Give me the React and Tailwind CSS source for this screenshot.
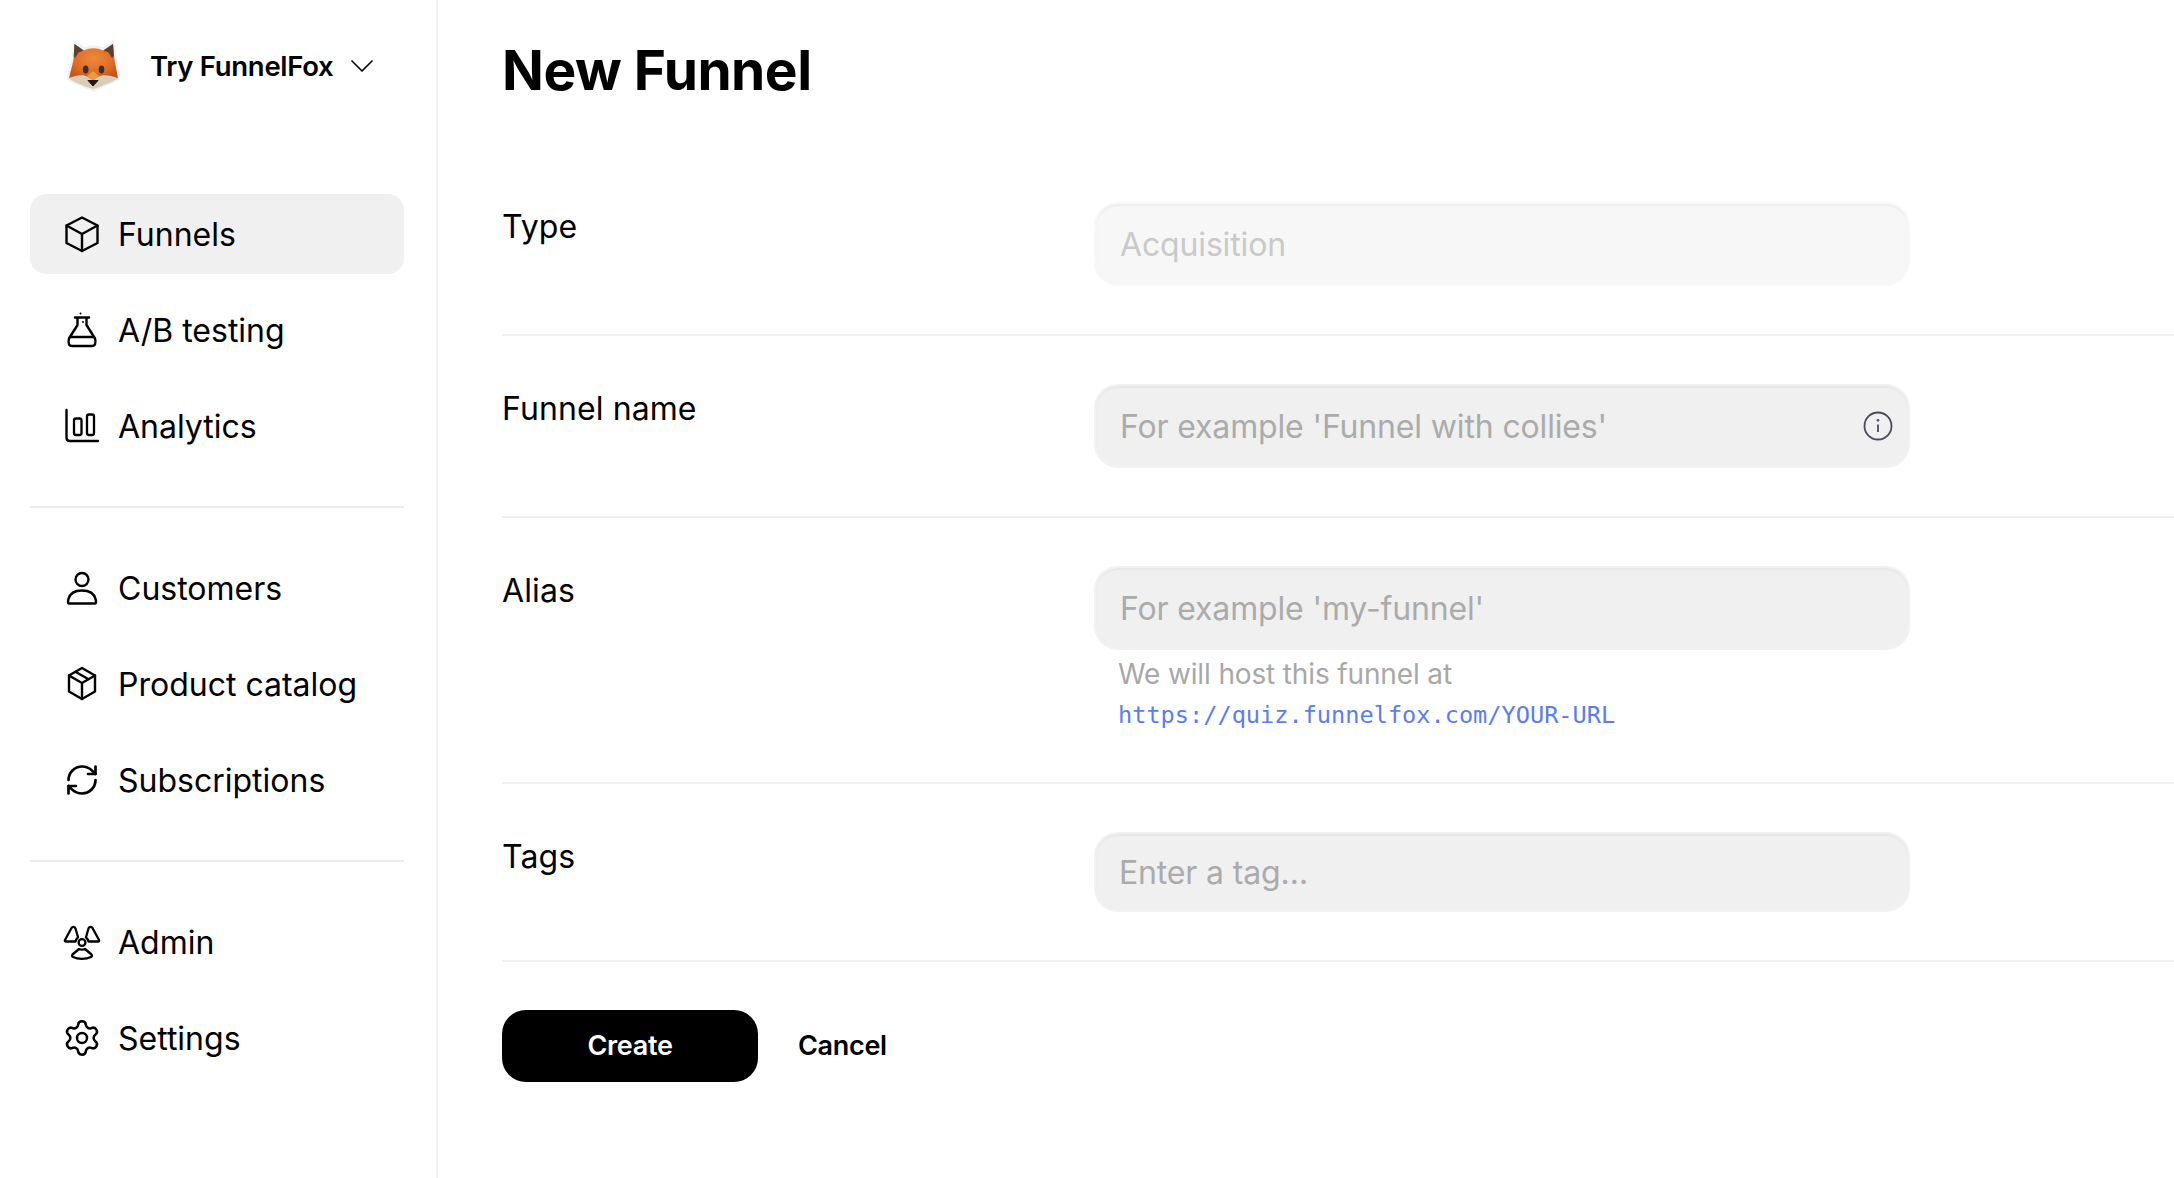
import React from "react";
import { RefreshCw, Settings, ChevronDown } from "lucide-react";

const Ic = ({ children }) => (
  <svg width="40" height="40" viewBox="0 0 40 40" fill="none" stroke="currentColor" strokeWidth="2.400" strokeLinejoin="round" strokeLinecap="round" className="shrink-0">
    {children}
  </svg>
);

const Cube = () => (
  <Ic>
    <path d="M20 3.500 35.500 11.500V29L20 37 4.500 29V11.500Z" />
    <path d="M4.500 11.500 20 20 35.500 11.500M20 20V37" />
  </Ic>
);
const Flask = () => (
  <Ic>
    <path d="M13 7.500H27M15.500 7.500V15L7 28.500C6 32 6.500 36 10 36H30C33.500 36 34 32 33 28.500L24.500 15V7.500" />
    <path d="M8 27H32" />
    <circle cx="18.500" cy="3.500" r="1" fill="currentColor" stroke="none" />
    <circle cx="21" cy="12" r="1" fill="currentColor" stroke="none" />
  </Ic>
);
const Chart = () => (
  <Ic>
    <path d="M4.500 4V31.500C4.500 33.500 5.500 35 8 35H36" />
    <rect x="12" y="12.500" width="7.500" height="16.500" rx="2" strokeWidth="2.300" />
    <rect x="25" y="8.500" width="7" height="20.500" rx="2" strokeWidth="2.300" />
  </Ic>
);
const Person = () => (
  <Ic>
    <circle cx="20" cy="11.500" r="6.500" />
    <path d="M7 35.500C5.500 35.500 6 32.500 6.500 31 8 25 13 22.500 20 22.500S32 25 33.500 31C34 32.500 34.500 35.500 33 35.500Z" />
  </Ic>
);
const Pack = () => (
  <Ic>
    <path d="M20 4 33 11.500V27.500L20 35 7 27.500V11.500Z" />
    <path d="M7 11.500 20 19 33 11.500M20 19V35M13.500 7.800 26.500 15.200" />
  </Ic>
);
const Radiation = () => (
  <Ic>
    <circle cx="20" cy="20.500" r="3.400" strokeWidth="2.300" />
    <path d="M9.500 6 3 18C2.500 19 3 19.500 4 19.500H13.500C14 17.500 14.800 16.300 16 15.300L13.500 6.500C12.800 4.500 10.500 4.300 9.500 6Z" strokeWidth="2.300" />
    <path d="M30.500 6 37 18C37.500 19 37 19.500 36 19.500H26.500C26 17.500 25.200 16.300 24 15.300L26.500 6.500C27.200 4.500 29.500 4.300 30.500 6Z" strokeWidth="2.300" />
    <path d="M17 27C19 27.800 21 27.800 23 27L29.500 32.500C30.500 33.500 30 34.500 29 35 24 37.500 16 37.500 11 35 10 34.500 9.500 33.500 10.500 32.500Z" strokeWidth="2.300" />
  </Ic>
);

const Fox = () => (
  <svg width="66" height="60" viewBox="60 35 66 60" className="shrink-0">
    <defs>
      <radialGradient id="fx" cx="50%" cy="40%" r="60%">
        <stop offset="0%" stopColor="#ee8a3c" />
        <stop offset="70%" stopColor="#dd6a22" />
        <stop offset="100%" stopColor="#c4541a" />
      </radialGradient>
    </defs>
    <path d="M75 42 84 49C90 46.500 97 46.500 103 49L113 42 115 58 119 78C112 83 105 84 100 87L93 90 86 87C81 84 74 83 68 78L73 58Z" fill="#fff" stroke="#f1f1f1" strokeWidth="3" strokeLinejoin="round" />
    <path d="M74.500 44 84 50.500C90 47.500 97 47.500 103 50.500L113 44 114.500 60 118 78C111 81 104 80 93 80S75 81 69 78L73.500 60Z" fill="url(#fx)" />
    <path d="M74.500 44 83.500 50.500 78.500 52.500 75 58 73.800 56Z" fill="#544235" />
    <path d="M113 44 103.500 50.500 108.500 52.500 112 58 113.800 56Z" fill="#544235" />
    <path d="M69 78C76 75 84 74 88 77L93 80 98 77C102 74 110 75 118 78 112 83 105 84 100 87L93 89 86 87C81 84 74 83 69 78Z" fill="#dccdb8" />
    <path d="M87 76 93 71 99 76 93 81Z" fill="#eb9a3e" />
    <ellipse cx="85.700" cy="69.500" rx="2.800" ry="4" fill="#3a3230" />
    <ellipse cx="101.500" cy="69.500" rx="2.800" ry="4" fill="#3a3230" />
    <path d="M88 80.500H98L93 86Z" fill="#1f1a1a" strokeLinejoin="round" stroke="#1f1a1a" />
  </svg>
);

const NavItem = ({ icon, label, active }) => (
  <div className={`flex h-20 items-center gap-4 rounded-2xl pl-8 text-[32px] leading-none text-black ${active ? "bg-[#f0f0f0]" : ""}`}>
    {icon}
    <span className="pt-[2px]">{label}</span>
  </div>
);

const Field = ({ placeholder, disabled, height = "h-[84px]", inset = "pl-[24px]", icon }) => (
  <div className={`relative ${height} w-full rounded-3xl border-2 shadow-[inset_0_2px_2px_rgba(0,0,0,0.04)] ${disabled ? "border-[#f8f8f8] bg-[#f7f7f7]" : "border-[#f2f2f2] bg-[#f0f0f0]"}`}>
    <input
      readOnly
      placeholder={placeholder}
      className={`h-full w-full bg-transparent ${inset} pr-16 text-[32px] tracking-[-0.15px] outline-none ${disabled ? "placeholder:text-[#c9c9c9]" : "placeholder:text-[#ababab]"}`}
    />
    {icon}
  </div>
);

const Row = ({ label, children }) => (
  <div className="grid grid-cols-[592px_816px] border-b-2 border-[#f0f0f0] py-12">
    <div className="pt-[1px] text-[32px] leading-[48px] tracking-[0.1px] text-black">{label}</div>
    <div>{children}</div>
  </div>
);

const Info = (
  <svg width="30" height="30" viewBox="0 0 30 30" fill="none" stroke="#4a4a5c" strokeWidth="1.800" className="absolute right-[15px] top-[25px]">
    <circle cx="15" cy="15" r="13.500" />
    <path d="M15 13.500V21" />
    <circle cx="15" cy="9.300" r="1.300" fill="#4a4a5c" stroke="none" />
  </svg>
);

export default function App() {
  return (
    <div className="flex h-[1178px] w-[2174px] overflow-hidden bg-white font-['Inter',sans-serif] text-black">
      <aside className="w-[438px] shrink-0 border-r-2 border-[#f0f0f0] pl-[30px] pr-[32px]">
        <div className="flex h-[194px] items-start gap-6 pl-[30px] pt-[35px]">
          <Fox />
          <div className="flex h-[62px] items-center gap-[9px]">
            <span className="pt-[2px] text-[27.500px] font-semibold leading-none tracking-[-0.3px]">Try FunnelFox</span>
            <ChevronDown size={40} strokeWidth={1} />
          </div>
        </div>
        <nav className="flex flex-col gap-4">
          <NavItem active icon={<Cube />} label="Funnels" />
          <NavItem icon={<Flask />} label="A/B testing" />
          <NavItem icon={<Chart />} label="Analytics" />
        </nav>
        <div className="my-10 h-[2px] bg-[#ececec]" />
        <nav className="flex flex-col gap-4">
          <NavItem icon={<Person />} label="Customers" />
          <NavItem icon={<Pack />} label="Product catalog" />
          <NavItem icon={<span className="flex h-10 w-10 items-center justify-center"><RefreshCw size={36} strokeWidth={1.800} /></span>} label="Subscriptions" />
        </nav>
        <div className="my-10 h-[2px] bg-[#ececec]" />
        <nav className="flex flex-col gap-4">
          <NavItem icon={<Radiation />} label="Admin" />
          <NavItem icon={<span className="flex h-10 w-10 items-center justify-center"><Settings size={40} strokeWidth={1.500} /></span>} label="Settings" />
        </nav>
      </aside>
      <main className="min-w-0 flex-1 pl-[64px]">
        <h1 className="flex h-[154px] items-start pt-[36px] text-[55px] font-bold leading-[68px] tracking-[-0.5px]">New Funnel</h1>
        <Row label="Type"><Field disabled placeholder="Acquisition" /></Row>
        <Row label="Funnel name"><Field placeholder="For example 'Funnel with collies'" icon={Info} /></Row>
        <Row label="Alias">
          <Field placeholder="For example 'my-funnel'" />
          <div className="pl-6 pt-[5px] text-[28px] leading-[38px] tracking-[-0.14px] text-[#a8a8a8]">We will host this funnel at</div>
          <div className="pl-6 pt-[3px] font-['DejaVu_Sans_Mono',monospace] text-[23.600px] leading-[38px] text-[#5b7cf5]">https://quiz.funnelfox.com/YOUR-URL</div>
        </Row>
        <Row label="Tags"><Field height="h-20" inset="pl-[23px]" placeholder="Enter a tag…" /></Row>
        <div className="flex items-center gap-10 pt-12">
          <button className="h-[72px] w-[256px] rounded-3xl bg-black text-[27px] font-semibold tracking-[-0.3px] text-white">Create</button>
          <button className="text-[27px] font-semibold tracking-[-0.3px] text-black">Cancel</button>
        </div>
      </main>
    </div>
  );
}
